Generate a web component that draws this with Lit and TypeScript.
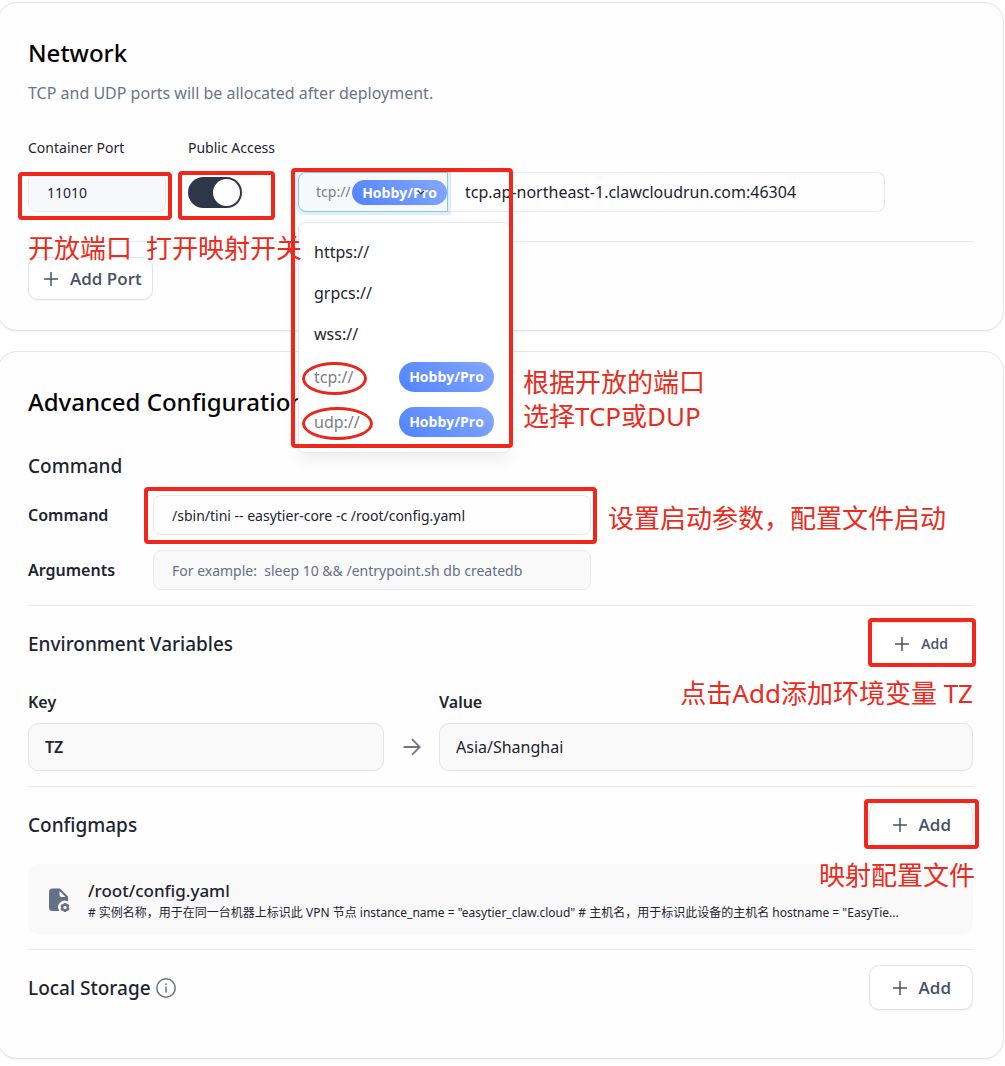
import { LitElement, html, css, svg, nothing } from "lit";
import { customElement, property, state } from "lit/decorators.js";

interface Protocol {
  value: string;
  paid: boolean;
}

const PROTOCOLS: Protocol[] = [
  { value: "https", paid: false },
  { value: "grpcs", paid: false },
  { value: "wss", paid: false },
  { value: "tcp", paid: true },
  { value: "udp", paid: true },
];

const CONFIG_PREVIEW =
  '# 实例名称，用于在同一台机器上标识此 VPN 节点 instance_name = "easytier_claw.cloud" # 主机名，用于标识此设备的主机名 hostname = "EasyTie...';

const plusPath = svg`<path d="M7 0.5V13.5M0.5 7H13.5" />`;

@customElement("add-button")
export class AddButton extends LitElement {
  @property() label = "Add";
  @property({ type: Boolean, reflect: true }) small = false;

  static styles = css`
    :host {
      display: block;
    }
    .btn {
      display: flex;
      align-items: center;
      gap: 12px;
      height: 45px;
      padding: 0 21px 0 23px;
      border: 1px solid #e0e3ea;
      border-radius: 10px;
      background: #fff;
      box-shadow: 0 1px 2px rgba(16, 24, 40, 0.05);
      color: #485264;
      font: 600 17px/24px "Open Sans", "Noto Sans", sans-serif;
      cursor: pointer;
    }
    :host([small]) .btn {
      height: 43px;
      padding: 0 24px 0 25px;
      font-size: 14px;
    }
    :host([compact]) .btn {
      height: 43px;
      padding: 0 10px 0 15px;
    }
    .plus {
      width: 14px;
      height: 14px;
      fill: none;
      stroke: #485264;
      stroke-width: 1.5;
      stroke-linecap: round;
    }
  `;

  render() {
    return html`<button class="btn" type="button">
      <svg class="plus" viewBox="0 0 14 14" aria-hidden="true">${plusPath}</svg>
      ${this.label}
    </button>`;
  }
}

@customElement("app-root")
export class AppRoot extends LitElement {
  @state() private protocol = "tcp";
  @state() private menuOpen = true;

  static styles = css`
    :host {
      display: block;
      padding: 2px 1px 7px 0;
      background: #fff;
      color: #1d2430;
      font: 400 16px/24px "Noto Sans", "Open Sans", "Noto Sans CJK SC", sans-serif;
    }
    * {
      box-sizing: border-box;
    }
    h2,
    h3,
    p,
    ul {
      margin: 0;
      padding: 0;
    }
    .card {
      margin: 0 0 20px -3px;
      padding: 32px 30px 30px;
      border: 1px solid #e4e5e8;
      border-radius: 20px;
      background: #fefefe;
      box-shadow: 0 1px 2px rgba(16, 24, 40, 0.06);
    }
    .card.last {
      margin-bottom: 0;
      padding-bottom: 33px;
    }
    .title {
      color: #050505;
      font-size: 24px;
      font-weight: 500;
      line-height: 36px;
    }
    .subtitle {
      margin-top: 10px;
      color: #6b7588;
    }
    .input {
      display: block;
      width: 100%;
      min-width: 0;
      height: 40px;
      padding: 0 18px;
      border: 1px solid #e8eaed;
      border-radius: 8px;
      background: #fefefe;
      color: #1d2430;
      font: inherit;
      font-size: 14px;
      outline: none;
    }
    .input::placeholder {
      color: #667085;
      opacity: 1;
    }
    .muted {
      background: #f9f9fa;
    }

    /* Network */
    .ports {
      display: flex;
      align-items: flex-end;
      gap: 22px;
      margin-top: 33px;
      padding-bottom: 29px;
      border-bottom: 1px solid #e8eaed;
    }
    .field {
      position: relative;
      flex: none;
    }
    .port {
      width: 138px;
    }
    .access {
      width: 88px;
    }
    .label {
      display: block;
      margin-bottom: 14px;
      font-size: 14px;
      line-height: 20px;
      white-space: nowrap;
    }
    .slot {
      position: relative;
      display: flex;
      align-items: center;
      height: 40px;
    }
    .slot .input {
      background: #f7f8fa;
    }
    .switch {
      appearance: none;
      display: grid;
      align-items: center;
      width: 54px;
      height: 31px;
      margin: 0;
      padding: 2px;
      border-radius: 16px;
      background: #2d3748;
      cursor: pointer;
    }
    .switch::before {
      content: "";
      width: 27px;
      height: 27px;
      border-radius: 50%;
      background: #fff;
    }
    .switch:checked::before {
      justify-self: end;
    }
    .address {
      position: relative;
      display: flex;
      flex: 0 1 587px;
      min-width: 0;
    }
    .picker {
      position: relative;
      flex: none;
      width: 150px;
    }
    .select {
      appearance: none;
      display: block;
      width: 100%;
      height: 40px;
      padding: 0 17px;
      border: 1px solid #88c6ec;
      border-radius: 8px 0 0 8px;
      background: #f7f8fa;
      box-shadow: 0 0 0 3px rgba(33, 155, 244, 0.15);
      color: #7b8087;
      font: inherit;
      font-size: 14px;
      outline: none;
    }
    .host {
      padding: 0 17px;
      border-left: 0;
      border-radius: 0 8px 8px 0;
      font-size: 16px;
    }
    .badge {
      display: flex;
      align-items: center;
      justify-content: center;
      width: 95px;
      height: 30px;
      border-radius: 15px;
      background: linear-gradient(45deg, #4f83ff, #86a8ff);
      color: #fff;
      font-family: "Open Sans", "Noto Sans", sans-serif;
      font-size: 14px;
      font-weight: 700;
      line-height: 20px;
    }
    .picker .badge {
      position: absolute;
      top: 8px;
      right: 1px;
      height: 25px;
      pointer-events: none;
    }
    .chevron {
      position: absolute;
      top: 16px;
      right: 22px;
      width: 10px;
      height: 8px;
      fill: none;
      stroke: #2d3748;
      stroke-width: 1.2;
      pointer-events: none;
    }
    .menu {
      position: absolute;
      z-index: 2;
      top: 50px;
      left: 0;
      width: 212px;
      padding: 8px 15px;
      border: 1px solid #e6e8ec;
      border-radius: 6px;
      background: #fff;
      box-shadow: 0 8px 16px rgba(16, 24, 40, 0.06);
      list-style: none;
    }
    .option {
      display: flex;
      align-items: center;
      justify-content: space-between;
      width: 100%;
      height: 41px;
      padding: 0;
      border: 0;
      background: none;
      color: #1d2430;
      font: inherit;
      cursor: pointer;
    }
    .option.paid {
      height: 45px;
      color: #7b8087;
    }
    .option .scheme {
      position: relative;
    }
    .actions {
      display: flex;
      margin-top: 15px;
    }

    /* Advanced configuration */
    .sub {
      font-size: 19px;
      font-weight: 500;
      line-height: 24px;
    }
    .command {
      display: grid;
      grid-template-columns: 125px minmax(0, 438px);
      align-items: center;
      gap: 15px 0;
      margin-top: 17px;
      padding-bottom: 15px;
    }
    .command-title {
      margin-top: 34px;
    }
    .strong {
      font-size: 16px;
      font-weight: 600;
      line-height: 24px;
    }
    .anchor {
      position: relative;
    }
    .section {
      padding: 15px 0;
      border-top: 1px solid #e8eaed;
    }
    .head {
      display: flex;
      align-items: center;
      justify-content: space-between;
      height: 45px;
    }
    .heading {
      display: flex;
      align-items: center;
      gap: 5px;
    }
    .info {
      width: 20px;
      height: 20px;
      fill: none;
      stroke: #6d7178;
      stroke-width: 1.5;
    }
    .env {
      display: grid;
      grid-template-columns: 2fr 55px 3fr;
      gap: 9px 0;
      align-items: center;
      margin-top: 24px;
    }
    .env .input {
      height: 48px;
      padding: 0 16px;
      border-color: #e3e4e7;
      border-radius: 10px;
      font-size: 16px;
    }
    .env .key {
      font-weight: 600;
    }
    .third {
      grid-column: 3;
    }
    .arrow {
      justify-self: center;
      width: 18px;
      height: 18px;
      fill: none;
      stroke: #73777d;
      stroke-width: 1.8;
    }
    .file {
      display: flex;
      align-items: center;
      gap: 17px;
      height: 70px;
      margin-top: 17px;
      padding: 3px 16px 0 19px;
      border-radius: 10px;
      background: #f9f9f9;
    }
    .file-icon {
      flex: none;
      width: 24px;
      height: 26px;
    }
    .file-text {
      min-width: 0;
    }
    .path {
      font-size: 17px;
      font-weight: 500;
      line-height: 24px;
    }
    .preview {
      overflow: hidden;
      font-size: 12px;
      line-height: 20px;
      text-overflow: ellipsis;
      white-space: nowrap;
    }

    /* Annotations */
    .mark {
      position: absolute;
      z-index: 3;
      border: 4px solid #f0281c;
      border-radius: 4px;
      pointer-events: none;
    }
    .mark-port {
      inset: 0 -6px -8px -10px;
    }
    .mark-access {
      inset: -1px 1px -8px -10px;
    }
    .mark-menu {
      top: -4px;
      left: -7px;
      width: 222px;
      height: 280px;
    }
    .mark-command {
      inset: -8px -6px -9px -9px;
    }
    .mark-env {
      inset: -4px -3px -2px -1px;
    }
    .mark-maps {
      inset: -3px -6px -2px -5px;
    }
    .ring {
      position: absolute;
      z-index: 3;
      inset: -3px -13px -6px -12px;
      border: 3px solid #e8281d;
      border-radius: 50%;
      pointer-events: none;
    }
    .note {
      position: absolute;
      z-index: 4;
      color: #e92c20;
      font-size: 26px;
      line-height: 34px;
      white-space: nowrap;
      pointer-events: none;
    }
    .note-port {
      top: 59px;
      left: 0;
    }
    .note-access {
      top: 59px;
      left: -42px;
    }
    .note-menu {
      top: 193px;
      left: 225px;
    }
    .note-command {
      top: 6px;
      left: 455px;
    }
    .note-env {
      top: 54px;
      right: 0;
    }
    .note-maps {
      top: 56px;
      right: -2px;
    }
  `;

  private choose(value: string) {
    this.protocol = value;
  }

  private renderOption(p: Protocol) {
    return html`<li>
      <button
        class="option ${p.paid ? "paid" : ""}"
        type="button"
        @click=${() => this.choose(p.value)}
      >
        <span class="scheme">
          ${p.value}://${p.paid ? html`<span class="ring"></span>` : nothing}
        </span>
        ${p.paid ? html`<span class="badge">Hobby/Pro</span>` : nothing}
      </button>
    </li>`;
  }

  private renderNetwork() {
    const paid = PROTOCOLS.find((p) => p.value === this.protocol)?.paid;
    return html`<section class="card">
      <h2 class="title">Network</h2>
      <p class="subtitle">TCP and UDP ports will be allocated after deployment.</p>
      <div class="ports">
        <div class="field port">
          <label class="label" for="port">Container Port</label>
          <div class="slot">
            <input id="port" class="input" inputmode="numeric" value="11010" />
            <span class="mark mark-port"></span>
            <span class="note note-port">开放端口</span>
          </div>
        </div>
        <div class="field access">
          <label class="label" for="access">Public Access</label>
          <div class="slot">
            <input id="access" class="switch" type="checkbox" role="switch" checked />
            <span class="mark mark-access"></span>
            <span class="note note-access">打开映射开关</span>
          </div>
        </div>
        <div class="address">
          <div class="picker">
            <select
              class="select"
              aria-label="Protocol"
              @change=${(e: Event) => this.choose((e.target as HTMLSelectElement).value)}
            >
              ${PROTOCOLS.map(
                (p) =>
                  html`<option value=${p.value} ?selected=${p.value === this.protocol}>
                    ${p.value}://
                  </option>`
              )}
            </select>
            ${paid ? html`<span class="badge">Hobby/Pro</span>` : nothing}
            <svg class="chevron" viewBox="0 0 10 8" aria-hidden="true">
              <path d="M2 3L5 6L8 3" />
            </svg>
          </div>
          <input
            class="input host"
            aria-label="Public address"
            readonly
            value="tcp.ap-northeast-1.clawcloudrun.com:46304"
          />
          ${this.menuOpen
            ? html`<ul class="menu">
                ${PROTOCOLS.map((p) => this.renderOption(p))}
              </ul>`
            : nothing}
          <span class="mark mark-menu"></span>
          <span class="note note-menu">根据开放的端口<br />选择TCP或DUP</span>
        </div>
      </div>
      <div class="actions"><add-button compact label="Add Port"></add-button></div>
    </section>`;
  }

  private renderAdvanced() {
    return html`<section class="card last">
      <h2 class="title">Advanced Configuration</h2>
      <h3 class="sub command-title">Command</h3>
      <div class="command">
        <label class="strong" for="command">Command</label>
        <div class="anchor">
          <input
            id="command"
            class="input"
            value="/sbin/tini -- easytier-core -c /root/config.yaml"
          />
          <span class="mark mark-command"></span>
          <span class="note note-command">设置启动参数，配置文件启动</span>
        </div>
        <label class="strong" for="arguments">Arguments</label>
        <input
          id="arguments"
          class="input muted"
          placeholder="For example:  sleep 10 && /entrypoint.sh db createdb"
        />
      </div>

      <div class="section">
        <div class="head">
          <h3 class="sub">Environment Variables</h3>
          <div class="anchor">
            <add-button small></add-button>
            <span class="mark mark-env"></span>
            <span class="note note-env">点击Add添加环境变量 TZ</span>
          </div>
        </div>
        <div class="env">
          <label class="strong" for="key">Key</label>
          <label class="strong third" for="value">Value</label>
          <input id="key" class="input muted key" value="TZ" />
          <svg class="arrow" viewBox="0 0 18 18" aria-hidden="true">
            <path d="M0.500 9H16.500M9 1.200L16.800 9L9 16.800" />
          </svg>
          <input id="value" class="input muted" value="Asia/Shanghai" />
        </div>
      </div>

      <div class="section">
        <div class="head">
          <h3 class="sub">Configmaps</h3>
          <div class="anchor">
            <add-button></add-button>
            <span class="mark mark-maps"></span>
            <span class="note note-maps">映射配置文件</span>
          </div>
        </div>
        <div class="file">
          <svg class="file-icon" viewBox="0 0 24 26" aria-hidden="true">
            <path
              fill="#667085"
              d="M5.500 0.500H13L21 8.500V13.500A6.500 6.500 0 0 0 12.500 23H5.500A3.500 3.500 0 0 1 2 19.500V4A3.500 3.500 0 0 1 5.500 0.500Z"
            />
            <path fill="#f9f9f9" d="M12.500 3V7A2 2 0 0 0 14.500 9H18.500Z" />
            <circle cx="18" cy="19.500" r="6" fill="#f9f9f9" />
            <circle cx="18" cy="19.500" r="2.800" fill="none" stroke="#667085" stroke-width="2.200" />
            <path
              fill="none"
              stroke="#667085"
              stroke-width="2.200"
              d="M18 14.900V16.500M18 22.500V24.100M14 17.200L15.400 18M20.600 21L22 21.800M14 21.800L15.400 21M20.600 18L22 17.200"
            />
          </svg>
          <div class="file-text">
            <p class="path">/root/config.yaml</p>
            <p class="preview">${CONFIG_PREVIEW}</p>
          </div>
        </div>
      </div>

      <div class="section">
        <div class="head">
          <div class="heading">
            <h3 class="sub">Local Storage</h3>
            <svg class="info" viewBox="0 0 20 20" aria-hidden="true">
              <circle cx="10" cy="10" r="9.200" />
              <path d="M10 8.500V14.500M10 5.500V7" />
            </svg>
          </div>
          <add-button></add-button>
        </div>
      </div>
    </section>`;
  }

  render() {
    return html`${this.renderNetwork()} ${this.renderAdvanced()}`;
  }
}
